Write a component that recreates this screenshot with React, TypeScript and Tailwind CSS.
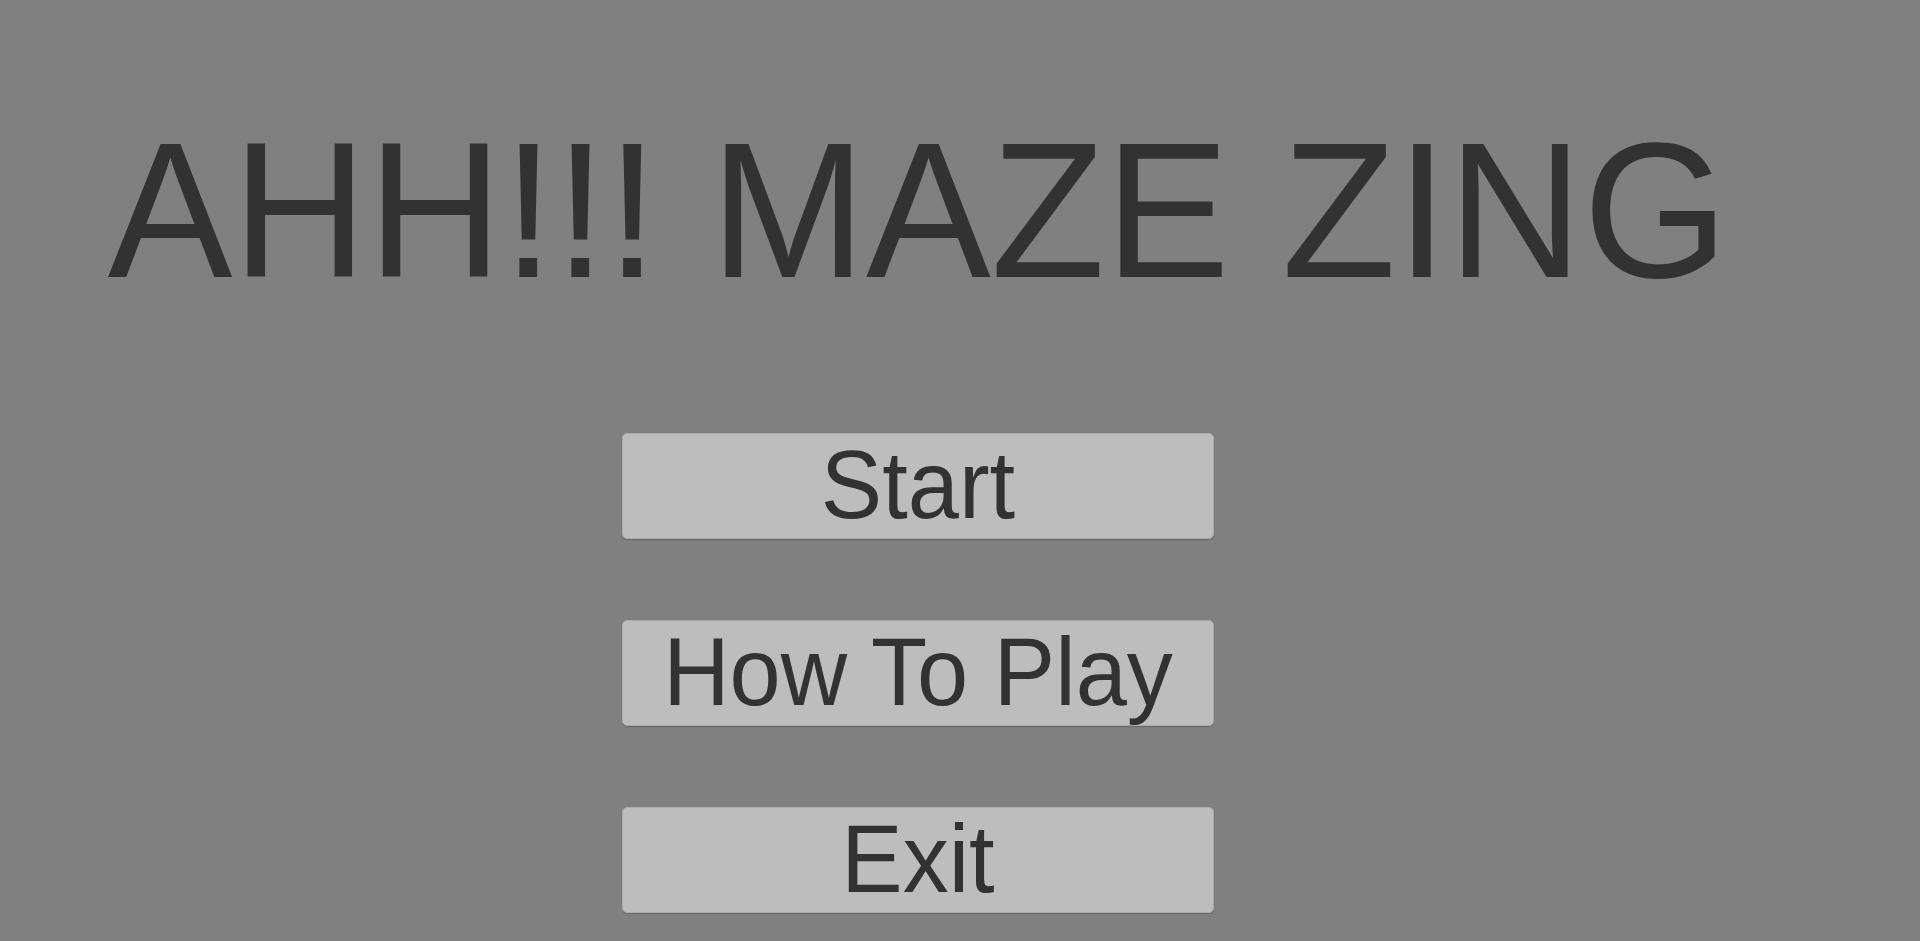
import React from 'react';

const buttons = ['Start', 'How To Play', 'Exit'];

export default function App() {
  return (
    <div
      className="w-full h-[941px] bg-[#808080] overflow-hidden flex flex-col items-center pr-[84px]"
      style={{ fontFamily: '"Liberation Sans", Arial, sans-serif' }}
    >
      {/* Title */}
      <h1 className="mt-[119px] text-[187px] leading-none text-[#323232] font-normal whitespace-nowrap scale-y-[1.035] origin-[50%_85%]">
        AHH!!! MAZE ZING
      </h1>

      {/* Menu buttons */}
      <div className="mt-[127px] flex flex-col gap-[81px]">
        {buttons.map((label) => (
          <button
            key={label}
            className="w-[592px] h-[106px] flex items-center justify-center bg-[#bdbdbd] rounded-[5px] border border-[#aaaaaa] shadow-[0_1px_1px_rgba(0,0,0,0.2)] text-[92px] leading-none text-[#323232] whitespace-nowrap"
          >
            <span className="block scale-y-[1.04] -translate-y-[1px]">{label}</span>
          </button>
        ))}
      </div>
    </div>
  );
}
